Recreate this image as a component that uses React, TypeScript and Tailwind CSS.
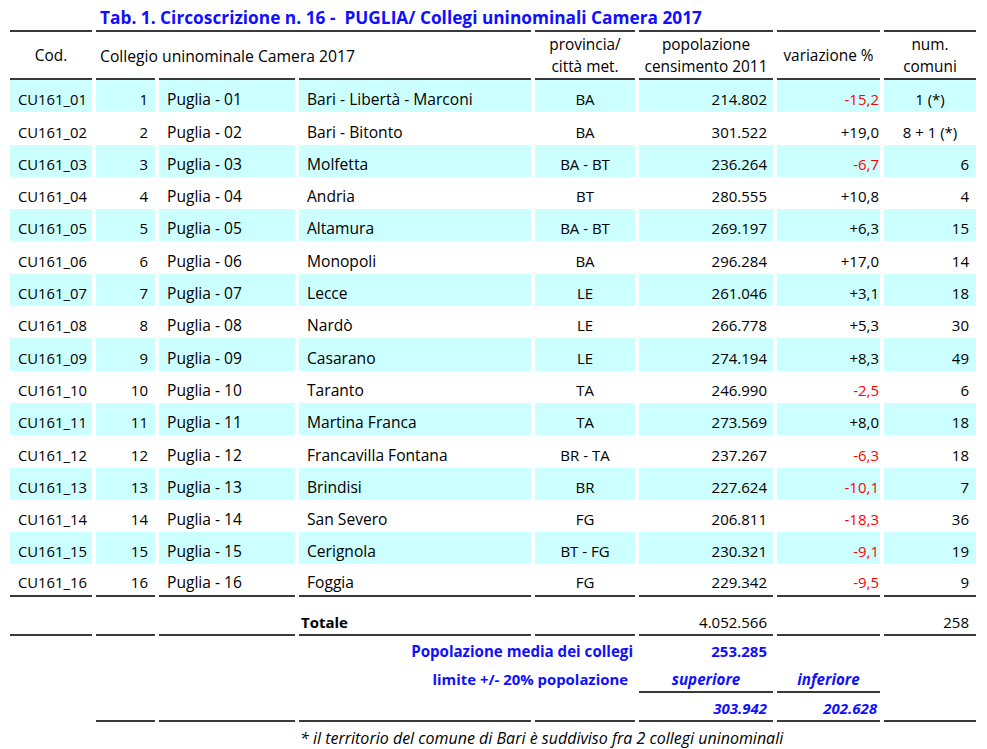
import { Fragment } from "react"

type Row = [string, number, string, string, string, string, string, string]

const rows: Row[] = [
  ["CU161_01", 1, "Puglia - 01", "Bari - Libertà - Marconi", "BA", "214.802", "-15,2", "1 (*)"],
  ["CU161_02", 2, "Puglia - 02", "Bari - Bitonto", "BA", "301.522", "+19,0", "8 + 1 (*)"],
  ["CU161_03", 3, "Puglia - 03", "Molfetta", "BA - BT", "236.264", "-6,7", "6"],
  ["CU161_04", 4, "Puglia - 04", "Andria", "BT", "280.555", "+10,8", "4"],
  ["CU161_05", 5, "Puglia - 05", "Altamura", "BA - BT", "269.197", "+6,3", "15"],
  ["CU161_06", 6, "Puglia - 06", "Monopoli", "BA", "296.284", "+17,0", "14"],
  ["CU161_07", 7, "Puglia - 07", "Lecce", "LE", "261.046", "+3,1", "18"],
  ["CU161_08", 8, "Puglia - 08", "Nardò", "LE", "266.778", "+5,3", "30"],
  ["CU161_09", 9, "Puglia - 09", "Casarano", "LE", "274.194", "+8,3", "49"],
  ["CU161_10", 10, "Puglia - 10", "Taranto", "TA", "246.990", "-2,5", "6"],
  ["CU161_11", 11, "Puglia - 11", "Martina Franca", "TA", "273.569", "+8,0", "18"],
  ["CU161_12", 12, "Puglia - 12", "Francavilla Fontana", "BR - TA", "237.267", "-6,3", "18"],
  ["CU161_13", 13, "Puglia - 13", "Brindisi", "BR", "227.624", "-10,1", "7"],
  ["CU161_14", 14, "Puglia - 14", "San Severo", "FG", "206.811", "-18,3", "36"],
  ["CU161_15", 15, "Puglia - 15", "Cerignola", "BT - FG", "230.321", "-9,1", "19"],
  ["CU161_16", 16, "Puglia - 16", "Foggia", "FG", "229.342", "-9,5", "9"],
]

const grid = "grid grid-cols-[82px_59px_136px_232px_100px_134px_103px_92px] gap-x-[4px]"
const rule = "h-[2px] bg-[#3a3a3a]"
const line = "border-b-2 border-[#3a3a3a]"
const blue = "text-[#1010ff]"
const head = "h-[46px] pt-[2px] flex flex-col items-center justify-center leading-[22px] text-[15.4px]"

export default function App() {
  return (
    <div className="w-[987px] h-[749px] bg-white text-black text-[15px] leading-[20px] font-['Open_Sans','Noto_Sans',sans-serif] overflow-hidden">
      <div className="h-[30px] flex items-end pl-[100px] pb-[1px]">
        <h1 className={`text-[17.3px] leading-[22px] font-bold ${blue}`}>
          Tab. 1. Circoscrizione n. 16 -&nbsp; PUGLIA/ Collegi uninominali Camera 2017
        </h1>
      </div>

      <div className={`${grid} ml-[10px]`}>
        {/* righe superiori dell'intestazione */}
        <div className={rule} />
        <div className={`col-span-3 ${rule}`} />
        <div className={rule} />
        <div className={rule} />
        <div className={rule} />
        <div className={rule} />

        {/* intestazione */}
        <div className={head}>Cod.</div>
        <div className="col-span-3 h-[46px] pt-[2px] flex items-center pl-[4px] text-[15.7px]">Collegio uninominale Camera 2017</div>
        <div className={head}>
          <span>provincia/</span>
          <span>città met.</span>
        </div>
        <div className={head}>
          <span>popolazione</span>
          <span>censimento 2011</span>
        </div>
        <div className={head}>variazione %</div>
        <div className={head}>
          <span>num.</span>
          <span>comuni</span>
        </div>

        {Array.from({ length: 8 }).map((_, i) => (
          <div key={i} className={rule} />
        ))}

        {/* dati */}
        {rows.map((r, i) => {
          const bg = i % 2 === 0 ? "bg-[#ccffff]" : ""
          const last = i === rows.length - 1 ? line : ""
          const cell = `h-[32.3px] flex items-end pb-[3px] ${bg} ${last}`
          const neg = r[6].startsWith("-")
          const star = r[7].includes("*")
          return (
            <Fragment key={r[0]}>
              <div className={`${cell} pl-[8px] text-[14.8px]`}>{r[0]}</div>
              <div className={`${cell} justify-end pr-[7px]`}>{r[1]}</div>
              <div className={`${cell} pl-[8px] text-[15.6px]`}>{r[2]}</div>
              <div className={`${cell} pl-[8px] text-[15.6px]`}>{r[3]}</div>
              <div className={`${cell} justify-center`}>{r[4]}</div>
              <div className={`${cell} justify-end pr-[6px]`}>{r[5]}</div>
              <div className={`${cell} justify-end pr-[1px] ${neg ? "text-[#ff0000]" : ""}`}>{r[6]}</div>
              <div className={`${cell} ${star ? "justify-center" : "justify-end pr-[7px]"}`}>{r[7]}</div>
            </Fragment>
          )
        })}

        {/* totale */}
        <div className={`h-[39px] ${line}`} />
        <div className={line} />
        <div className={line} />
        <div className={`flex items-end pb-[2px] pl-[2px] font-bold ${line}`}>Totale</div>
        <div className={line} />
        <div className={`flex items-end justify-end pb-[2px] pr-[6px] ${line}`}>4.052.566</div>
        <div className={line} />
        <div className={`flex items-end justify-end pb-[2px] pr-[7px] ${line}`}>258</div>

        {/* media */}
        <div className={`col-start-4 col-span-2 h-[28px] flex items-end justify-end pb-[3px] pr-[2px] font-bold text-[15.1px] ${blue}`}>
          Popolazione media dei collegi
        </div>
        <div className={`flex items-end justify-end pb-[3px] pr-[6px] font-bold ${blue}`}>253.285</div>
        <div className="col-span-2" />

        {/* limiti */}
        <div className={`col-start-4 col-span-2 h-[29px] flex items-end justify-end pb-[4px] pr-[7px] font-bold text-[14.9px] ${blue}`}>
          limite +/- 20% popolazione
        </div>
        <div className={`flex items-end justify-center pb-[2px] font-bold italic text-[15.2px] ${line} ${blue}`}>superiore</div>
        <div className={`flex items-end justify-center pb-[2px] font-bold italic text-[15.2px] ${line} ${blue}`}>inferiore</div>
        <div />

        {/* valori limite */}
        <div className="h-[29px]" />
        <div className={line} />
        <div className={line} />
        <div className={line} />
        <div className={line} />
        <div className={`flex items-end justify-end pb-[2px] pr-[6px] font-bold italic ${line} ${blue}`}>303.942</div>
        <div className={`flex items-end justify-end pb-[2px] pr-[3px] font-bold italic ${line} ${blue}`}>202.628</div>
        <div className={line} />

        {/* nota */}
        <div className="col-start-4 col-span-5 h-[26px] flex items-end pl-[1px] italic text-[16px]">
          * il territorio del comune di Bari è suddiviso fra 2 collegi uninominali
        </div>
      </div>
    </div>
  )
}
